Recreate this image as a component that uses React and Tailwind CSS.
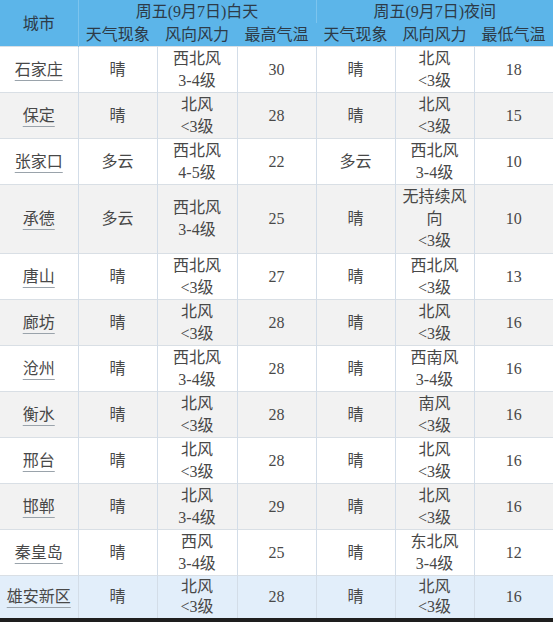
const day = "周五(9月7日)白天"
const night = "周五(9月7日)夜间"

const rows = [
  { city: "石家庄", dw: "晴", dwind: ["西北风", "3-4级"], hi: 30, nw: "晴", nwind: ["北风", "<3级"], lo: 18 },
  { city: "保定", dw: "晴", dwind: ["北风", "<3级"], hi: 28, nw: "晴", nwind: ["北风", "<3级"], lo: 15 },
  { city: "张家口", dw: "多云", dwind: ["西北风", "4-5级"], hi: 22, nw: "多云", nwind: ["西北风", "3-4级"], lo: 10 },
  { city: "承德", dw: "多云", dwind: ["西北风", "3-4级"], hi: 25, nw: "晴", nwind: ["无持续风", "向", "<3级"], lo: 10, tall: true },
  { city: "唐山", dw: "晴", dwind: ["西北风", "<3级"], hi: 27, nw: "晴", nwind: ["西北风", "<3级"], lo: 13 },
  { city: "廊坊", dw: "晴", dwind: ["北风", "<3级"], hi: 28, nw: "晴", nwind: ["北风", "<3级"], lo: 16 },
  { city: "沧州", dw: "晴", dwind: ["西北风", "3-4级"], hi: 28, nw: "晴", nwind: ["西南风", "3-4级"], lo: 16 },
  { city: "衡水", dw: "晴", dwind: ["北风", "<3级"], hi: 28, nw: "晴", nwind: ["南风", "<3级"], lo: 16 },
  { city: "邢台", dw: "晴", dwind: ["北风", "<3级"], hi: 28, nw: "晴", nwind: ["北风", "<3级"], lo: 16 },
  { city: "邯郸", dw: "晴", dwind: ["北风", "3-4级"], hi: 29, nw: "晴", nwind: ["北风", "<3级"], lo: 16 },
  { city: "秦皇岛", dw: "晴", dwind: ["西风", "3-4级"], hi: 25, nw: "晴", nwind: ["东北风", "3-4级"], lo: 12 },
  { city: "雄安新区", dw: "晴", dwind: ["北风", "<3级"], hi: 28, nw: "晴", nwind: ["北风", "<3级"], lo: 16 },
]

function Wind({ lines, tight }) {
  return (
    <div className={`flex flex-col items-center ${tight ? "leading-[20px]" : "leading-[22px]"}`}>
      {lines.map((l, i) => <span key={i}>{l}</span>)}
    </div>
  )
}

export default function App() {
  const cell = "border-r border-[#d3dde8] last:border-r-0 text-center align-middle p-0"
  return (
    <div className="w-[553px] h-[622px] overflow-hidden bg-white text-[16px] text-[#484848] flex flex-col"
      style={{ fontFamily: '"Liberation Serif", "Noto Sans CJK SC", serif' }}>
      <table className="w-[553px] table-fixed border-collapse shrink-0">
        <colgroup>
          <col className="w-[78px]" />
          <col className="w-[79px]" />
          <col className="w-[80px]" />
          <col className="w-[79px]" />
          <col className="w-[79px]" />
          <col className="w-[79px]" />
          <col className="w-[79px]" />
        </colgroup>
        <thead className="bg-[#5cb5e9] text-[#2d3b48]">
          <tr className="h-[23px] leading-[23px]">
            <th rowSpan={2} className="font-normal border-r border-[#7cc4ee] text-center p-0">城市</th>
            <th colSpan={3} className="font-normal border-r border-[#7cc4ee] p-0">{day}</th>
            <th colSpan={3} className="font-normal p-0">{night}</th>
          </tr>
          <tr className="h-[23px] leading-[23px]">
            {["天气现象", "风向风力", "最高气温", "天气现象", "风向风力", "最低气温"].map((h, i) => (
              <th key={i} className="font-normal whitespace-nowrap p-0">{h}</th>
            ))}
          </tr>
        </thead>
        <tbody>
          {rows.map((r, i) => {
            const last = i === rows.length - 1
            const bg = last ? "bg-[#e2eefa]" : i % 2 ? "bg-[#f2f2f2]" : "bg-white"
            return (
              <tr key={r.city} className={`${bg} ${r.tall ? "h-[69px]" : last ? "h-[42px]" : "h-[46px]"} border-t border-[#d9dfe5]`}>
                <td className={cell}>
                  <span className="underline decoration-[#9aa3ab] underline-offset-[5px] whitespace-nowrap">{r.city}</span>
                </td>
                <td className={cell}>{r.dw}</td>
                <td className={cell}><Wind lines={r.dwind} tight={last} /></td>
                <td className={cell}>{r.hi}</td>
                <td className={cell}>{r.nw}</td>
                <td className={cell}><Wind lines={r.nwind} tight={last} /></td>
                <td className={cell}>{r.lo}</td>
              </tr>
            )
          })}
        </tbody>
      </table>
      <div className="h-[4px] bg-[#1e1e1e] shrink-0" />
    </div>
  )
}
